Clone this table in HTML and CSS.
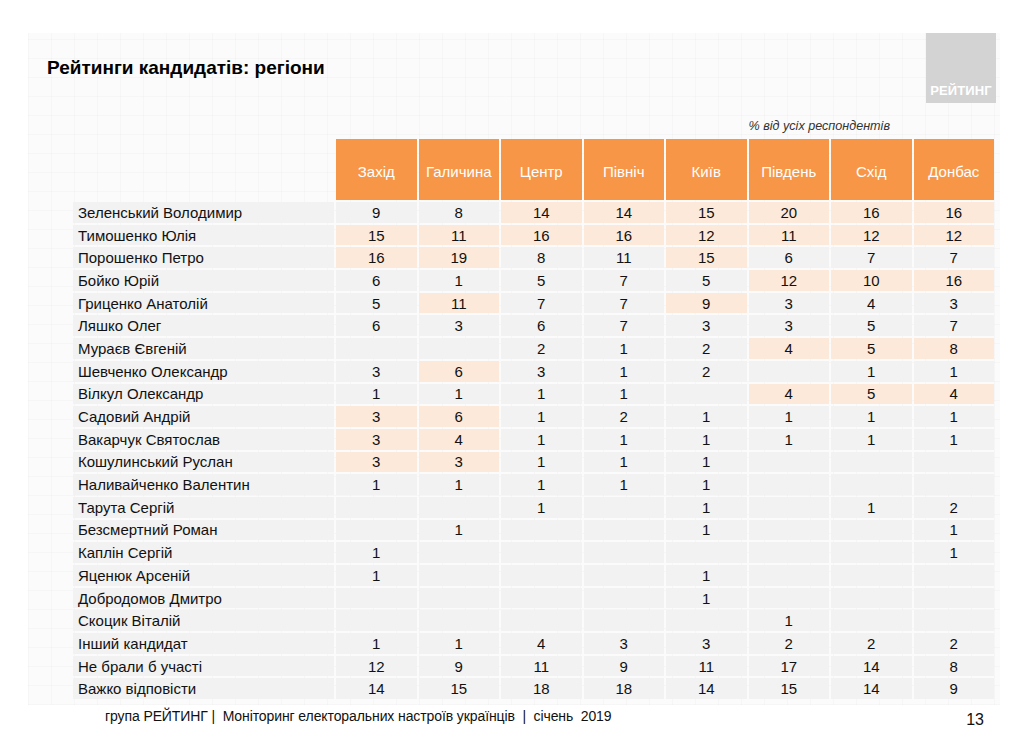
FILE: index.html
```html
<!DOCTYPE html>
<html lang="uk">
<head>
<meta charset="utf-8">
<title>Рейтинги кандидатів: регіони</title>
<link rel="stylesheet" href="styles.css">
</head>
<body>
<div class="page">
  <div class="sheet">
    <div class="top">
      <h1 class="title">Рейтинги кандидатів: регіони</h1>
      <div class="logo"><span>РЕЙТИНГ</span></div>
    </div>
    <div class="note">% від усіх респондентів</div>
    <table class="grid">
      <colgroup>
        <col class="c-name"><col class="c-val"><col class="c-val"><col class="c-val"><col class="c-val"><col class="c-val"><col class="c-val"><col class="c-val"><col class="c-val">
      </colgroup>
      <thead>
        <tr><th class="blank"></th><th>Захід</th><th>Галичина</th><th>Центр</th><th>Північ</th><th>Київ</th><th>Південь</th><th>Схід</th><th>Донбас</th></tr>
      </thead>
      <tbody>
        <tr><td class="name">Зеленський Володимир</td><td>9</td><td>8</td><td class="hi">14</td><td class="hi">14</td><td class="hi">15</td><td class="hi">20</td><td class="hi">16</td><td class="hi">16</td></tr>
        <tr><td class="name">Тимошенко Юлія</td><td class="hi">15</td><td class="hi">11</td><td class="hi">16</td><td class="hi">16</td><td class="hi">12</td><td class="hi">11</td><td class="hi">12</td><td class="hi">12</td></tr>
        <tr><td class="name">Порошенко Петро</td><td class="hi">16</td><td class="hi">19</td><td>8</td><td>11</td><td class="hi">15</td><td>6</td><td>7</td><td>7</td></tr>
        <tr><td class="name">Бойко Юрій</td><td>6</td><td>1</td><td>5</td><td>7</td><td>5</td><td class="hi">12</td><td class="hi">10</td><td class="hi">16</td></tr>
        <tr><td class="name">Гриценко Анатолій</td><td>5</td><td class="hi">11</td><td>7</td><td>7</td><td class="hi">9</td><td>3</td><td>4</td><td>3</td></tr>
        <tr><td class="name">Ляшко Олег</td><td>6</td><td>3</td><td>6</td><td>7</td><td>3</td><td>3</td><td>5</td><td>7</td></tr>
        <tr><td class="name">Мураєв Євгеній</td><td></td><td></td><td>2</td><td>1</td><td>2</td><td class="hi">4</td><td class="hi">5</td><td class="hi">8</td></tr>
        <tr><td class="name">Шевченко Олександр</td><td>3</td><td class="hi">6</td><td>3</td><td>1</td><td>2</td><td></td><td>1</td><td>1</td></tr>
        <tr><td class="name">Вілкул Олександр</td><td>1</td><td>1</td><td>1</td><td>1</td><td></td><td class="hi">4</td><td class="hi">5</td><td class="hi">4</td></tr>
        <tr><td class="name">Садовий Андрій</td><td class="hi">3</td><td class="hi">6</td><td>1</td><td>2</td><td>1</td><td>1</td><td>1</td><td>1</td></tr>
        <tr><td class="name">Вакарчук Святослав</td><td class="hi">3</td><td class="hi">4</td><td>1</td><td>1</td><td>1</td><td>1</td><td>1</td><td>1</td></tr>
        <tr><td class="name">Кошулинський Руслан</td><td class="hi">3</td><td class="hi">3</td><td>1</td><td>1</td><td>1</td><td></td><td></td><td></td></tr>
        <tr><td class="name">Наливайченко Валентин</td><td>1</td><td>1</td><td>1</td><td>1</td><td>1</td><td></td><td></td><td></td></tr>
        <tr><td class="name">Тарута Сергій</td><td></td><td></td><td>1</td><td></td><td>1</td><td></td><td>1</td><td>2</td></tr>
        <tr><td class="name">Безсмертний Роман</td><td></td><td>1</td><td></td><td></td><td>1</td><td></td><td></td><td>1</td></tr>
        <tr><td class="name">Каплін Сергій</td><td>1</td><td></td><td></td><td></td><td></td><td></td><td></td><td>1</td></tr>
        <tr><td class="name">Яценюк Арсеній</td><td>1</td><td></td><td></td><td></td><td>1</td><td></td><td></td><td></td></tr>
        <tr><td class="name">Добродомов Дмитро</td><td></td><td></td><td></td><td></td><td>1</td><td></td><td></td><td></td></tr>
        <tr><td class="name">Скоцик Віталій</td><td></td><td></td><td></td><td></td><td></td><td>1</td><td></td><td></td></tr>
        <tr><td class="name">Інший кандидат</td><td>1</td><td>1</td><td>4</td><td>3</td><td>3</td><td>2</td><td>2</td><td>2</td></tr>
        <tr><td class="name">Не брали б участі</td><td>12</td><td>9</td><td>11</td><td>9</td><td>11</td><td>17</td><td>14</td><td>8</td></tr>
        <tr><td class="name">Важко відповісти</td><td>14</td><td>15</td><td>18</td><td>18</td><td>14</td><td>15</td><td>14</td><td>9</td></tr>
      </tbody>
    </table>
  </div>
  <div class="footer">
    <span class="foot-text">група РЕЙТИНГ |&nbsp; Моніторинг електоральних настроїв українців &nbsp;| &nbsp;січень &nbsp;2019</span>
    <span class="foot-num">13</span>
  </div>
</div>
</body>
</html>
```

FILE: styles.css
```css
* { box-sizing: border-box; }

html, body {
  margin: 0;
  padding: 0;
  background: #ffffff;
}

body {
  font-family: "Liberation Sans", Arial, sans-serif;
  color: #000;
}

.page {
  width: 1024px;
  height: 732px;
  overflow: hidden;
  background: #ffffff;
  padding-top: 33px;
}

.sheet {
  margin-left: 28px;
  width: 972px;
  height: 672px;
  background-color: #fbfbfb;
  background-image:
    repeating-linear-gradient(90deg, rgba(0,0,0,0.018) 0 1px, transparent 1px 23px),
    repeating-linear-gradient(0deg, rgba(0,0,0,0.018) 0 1px, transparent 1px 19px);
}

.top {
  display: flex;
  justify-content: space-between;
  align-items: flex-start;
  height: 70px;
}

.title {
  margin: 23px 0 0 19px;
  font-size: 19px;
  line-height: 23px;
  font-weight: bold;
  color: #000;
}

.logo {
  width: 70px;
  height: 70px;
  margin-right: 4px;
  background: #d3d3d3;
  display: flex;
  align-items: flex-end;
  justify-content: center;
  padding-bottom: 5px;
}

.logo span {
  color: #ffffff;
  font-weight: bold;
  font-size: 13px;
  line-height: 14px;
  letter-spacing: 0.1px;
}

.note {
  margin: 16px 110px 0 0;
  text-align: right;
  font-style: italic;
  font-size: 12.6px;
  line-height: 14px;
  color: #333;
}

.grid {
  margin: 4px 0 0 43px;
  border-collapse: separate;
  border-spacing: 2px;
  table-layout: fixed;
  width: 925px;
}

.c-name { width: 261px; }
.c-val { width: 80.5px; }

.grid th {
  height: 61px;
  background: #f79646;
  color: #ffffff;
  font-weight: normal;
  font-size: 15px;
  text-align: center;
  padding: 4px 0 0 0;
}

.grid th.blank {
  background: transparent;
}

.grid tbody tr {
  height: 20.7px;
}

.grid td {
  background: #f2f2f2;
  font-size: 15px;
  line-height: 17px;
  text-align: center;
  padding: 0;
  color: #111;
}

.grid td.name {
  text-align: left;
  padding-left: 5px;
}

.grid td.hi {
  background: #fde9d9;
}

.footer {
  display: flex;
  justify-content: space-between;
  align-items: flex-start;
  padding: 3px 40px 0 105px;
}

.foot-text {
  font-size: 14px;
  line-height: 16px;
  letter-spacing: -0.1px;
  color: #111;
}

.foot-num {
  font-size: 16px;
  line-height: 16px;
  color: #111;
  margin-top: 4px;
}
```
